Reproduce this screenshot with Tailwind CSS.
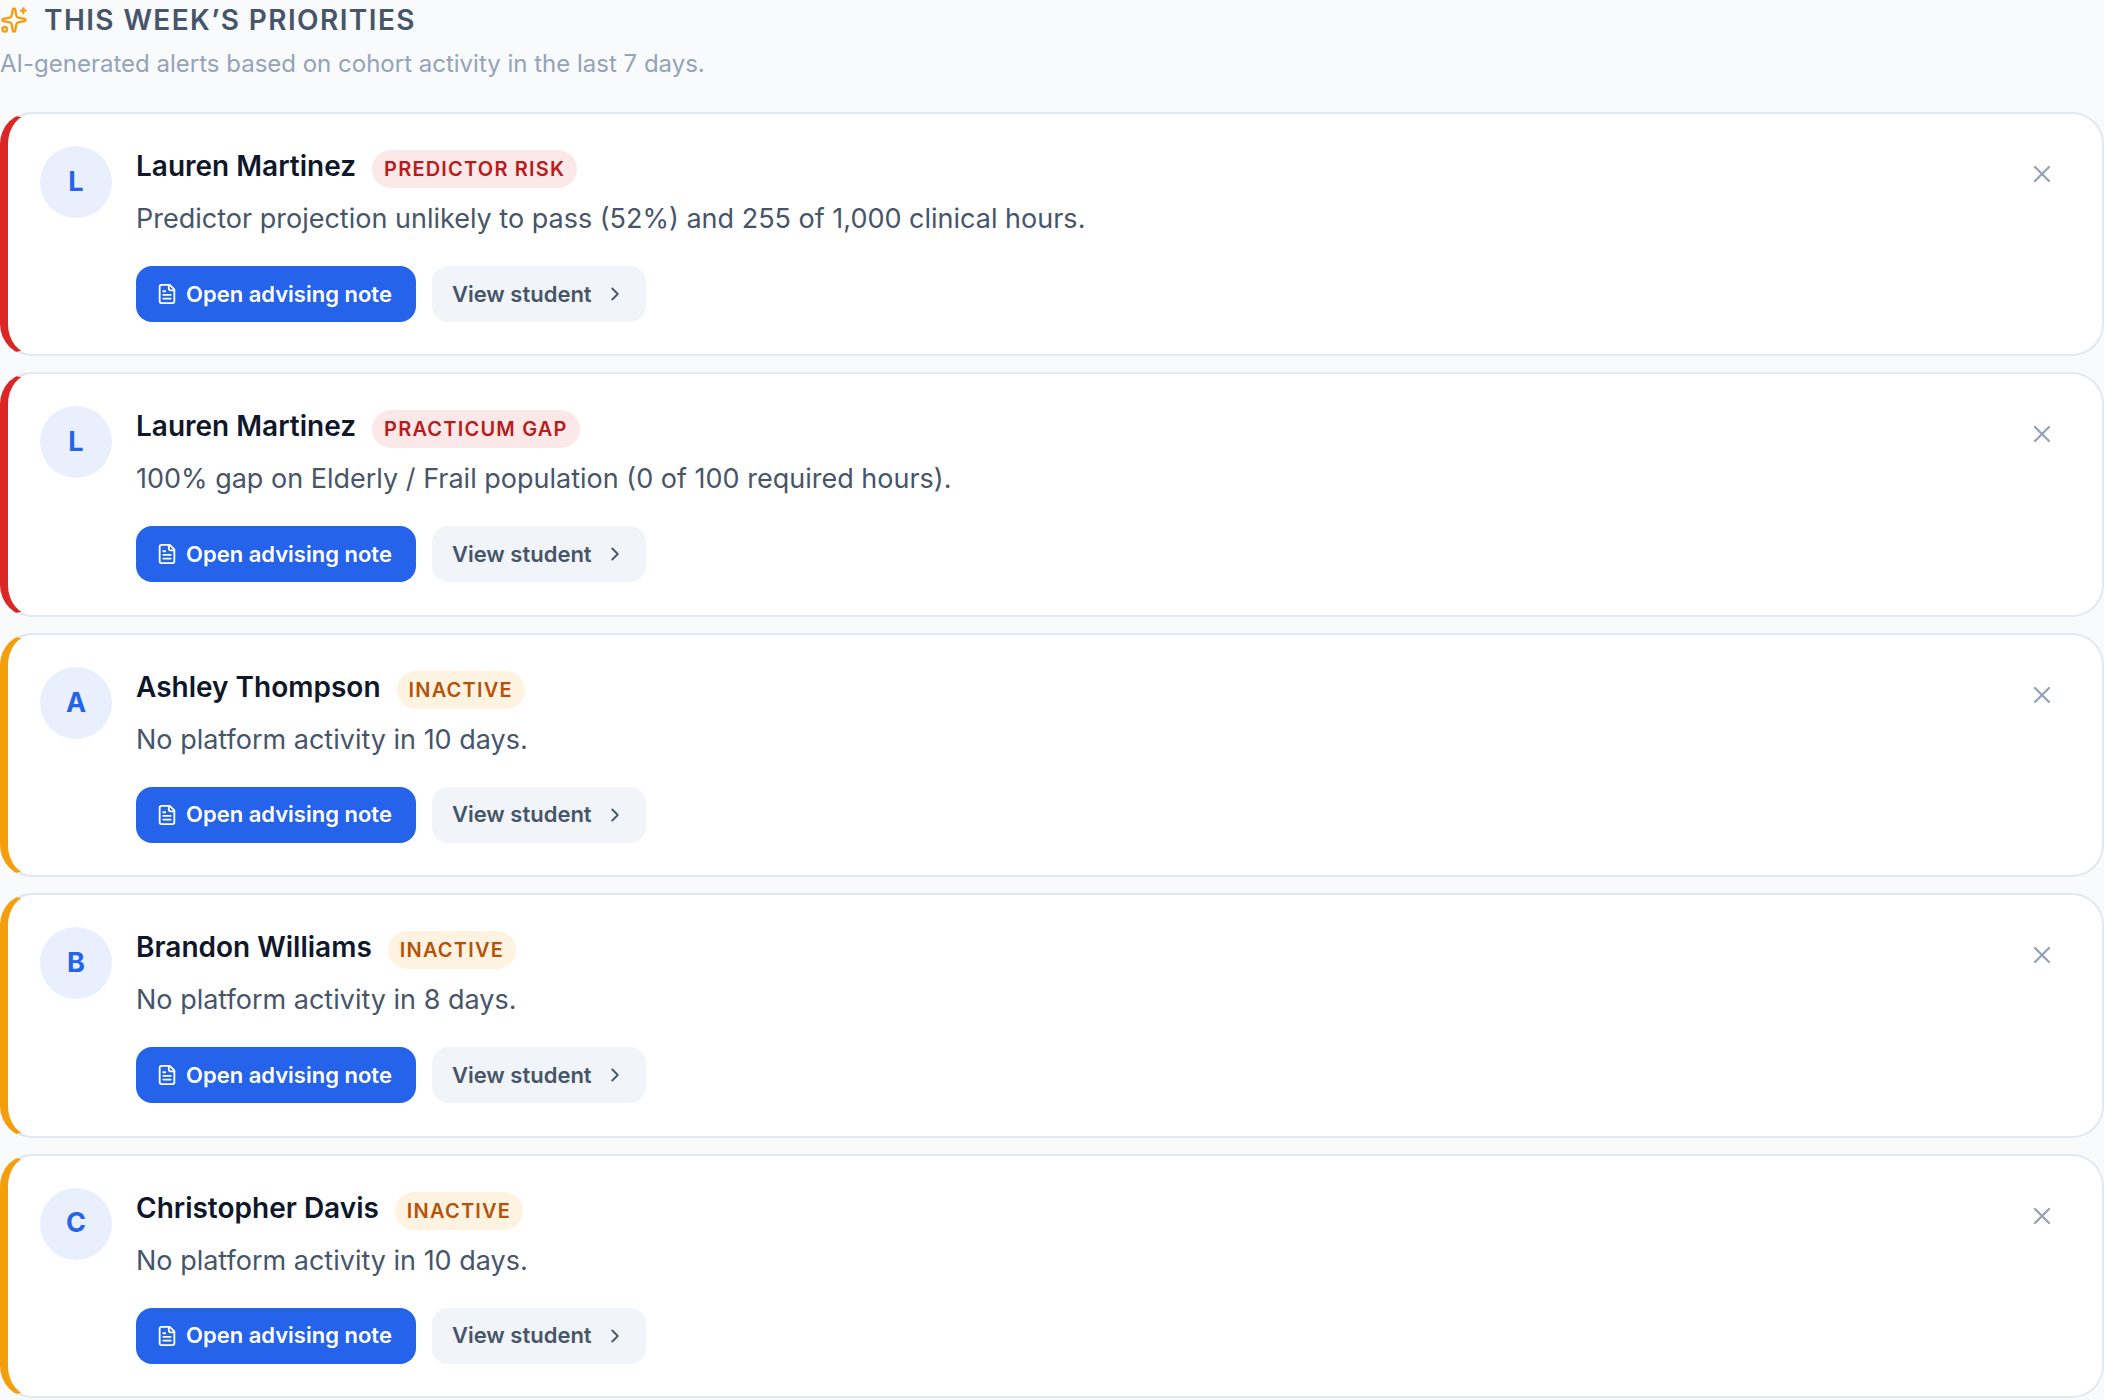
<!DOCTYPE html>
<html lang="en">
<head>
    <meta charset="UTF-8">
    <meta name="viewport" content="width=device-width, initial-scale=1.0">
    <script src="https://cdn.jsdelivr.net/npm/@tailwindcss/browser@4"></script>
    <title>This week's priorities</title>
</head>
<body class="bg-[#f9fafc] font-['Inter',sans-serif]">
    <main class="flex flex-col min-h-screen pb-[2px]">
        <header class="h-28">
            <div class="flex items-center gap-4 h-10">
                <svg class="size-7 text-[#f59e0b]" viewBox="0 0 24 24" fill="none" stroke="currentColor" stroke-width="2" stroke-linecap="round" stroke-linejoin="round" aria-hidden="true">
                    <path d="M11.017 2.814a1 1 0 0 1 1.966 0l1.051 5.558a2 2 0 0 0 1.594 1.594l5.558 1.051a1 1 0 0 1 0 1.966l-5.558 1.051a2 2 0 0 0-1.594 1.594l-1.051 5.558a1 1 0 0 1-1.966 0l-1.051-5.558a2 2 0 0 0-1.594-1.594l-5.558-1.051a1 1 0 0 1 0-1.966l5.558-1.051a2 2 0 0 0 1.594-1.594z"/>
                    <path d="M20 2v4"/><path d="M22 4h-4"/><circle cx="4" cy="20" r="2"/>
                </svg>
                <h1 class="text-[28px] font-semibold tracking-wider uppercase text-[#475569]">This week’s priorities</h1>
            </div>
            <p class="text-[24px] leading-12 text-[#94a3b8]">AI-generated alerts based on cohort activity in the last 7 days.</p>
        </header>
        <section id="alerts" class="flex flex-1 flex-col gap-4"></section>
    </main>

    <script>
        const tones = {
            red: { border: 'border-l-[#dc2626]', badge: 'bg-[#fbe9e9] text-[#b91c1c]' },
            amber: { border: 'border-l-[#f59e0b]', badge: 'bg-[#fef3e1] text-[#b45309]' },
        };
        const alerts = [
            { name: 'Lauren Martinez', badge: 'Predictor risk', tone: 'red', text: 'Predictor projection unlikely to pass (52%) and 255 of 1,000 clinical hours.' },
            { name: 'Lauren Martinez', badge: 'Practicum gap', tone: 'red', text: '100% gap on Elderly / Frail population (0 of 100 required hours).' },
            { name: 'Ashley Thompson', badge: 'Inactive', tone: 'amber', text: 'No platform activity in 10 days.' },
            { name: 'Brandon Williams', badge: 'Inactive', tone: 'amber', text: 'No platform activity in 8 days.' },
            { name: 'Christopher Davis', badge: 'Inactive', tone: 'amber', text: 'No platform activity in 10 days.' },
        ];
        const icon = (size, paths) =>
            `<svg class="${size} shrink-0" viewBox="0 0 24 24" fill="none" stroke="currentColor" stroke-width="2" stroke-linecap="round" stroke-linejoin="round" aria-hidden="true">${paths}</svg>`;

        document.getElementById('alerts').innerHTML = alerts.map((a) => `
            <article class="flex flex-1 items-start gap-6 rounded-[32px] border-2 border-l-8 border-[#e2e8f0] ${tones[a.tone].border} bg-white px-8 pt-8 pb-[31px]">
                <div class="flex size-18 shrink-0 items-center justify-center rounded-full bg-[#e9effd] text-[27px] font-bold text-[#2563eb]">${a.name[0]}</div>
                <div class="flex-1 min-w-0">
                    <div class="flex items-center gap-4 pt-[2px]">
                        <h2 class="text-[28px] leading-9 pb-[6px] font-semibold text-[#0f172a]">${a.name}</h2>
                        <span class="rounded-full px-3 text-[20px] leading-[38px] font-semibold tracking-[0.06em] uppercase ${tones[a.tone].badge}">${a.badge}</span>
                    </div>
                    <p class="mt-2 text-[27px] leading-[42px] text-[#475569]">${a.text}</p>
                    <div class="mt-[26px] flex gap-4">
                        <button type="button" class="flex h-14 items-center gap-2 rounded-2xl bg-[#2563eb] pl-5 pr-6 text-[22px] font-semibold text-white">
                            ${icon('size-[22px]', '<path d="M15 2H6a2 2 0 0 0-2 2v16a2 2 0 0 0 2 2h12a2 2 0 0 0 2-2V7Z"/><path d="M14 2v4a2 2 0 0 0 2 2h4"/><path d="M10 9H8"/><path d="M16 13H8"/><path d="M16 17H8"/>')}
                            Open advising note
                        </button>
                        <button type="button" class="flex h-14 items-center gap-3 rounded-2xl bg-[#f1f5f9] px-5 text-[22px] font-semibold text-[#475569]">
                            View student
                            ${icon('size-[22px]', '<path d="m9 18 6-6-6-6"/>')}
                        </button>
                    </div>
                </div>
                <button type="button" aria-label="Dismiss" class="flex size-14 shrink-0 items-center justify-center text-[#94a3b8]">
                    ${icon('size-7', '<path d="M18 6 6 18"/><path d="m6 6 12 12"/>')}
                </button>
            </article>`).join('');
    </script>
</body>
</html>
